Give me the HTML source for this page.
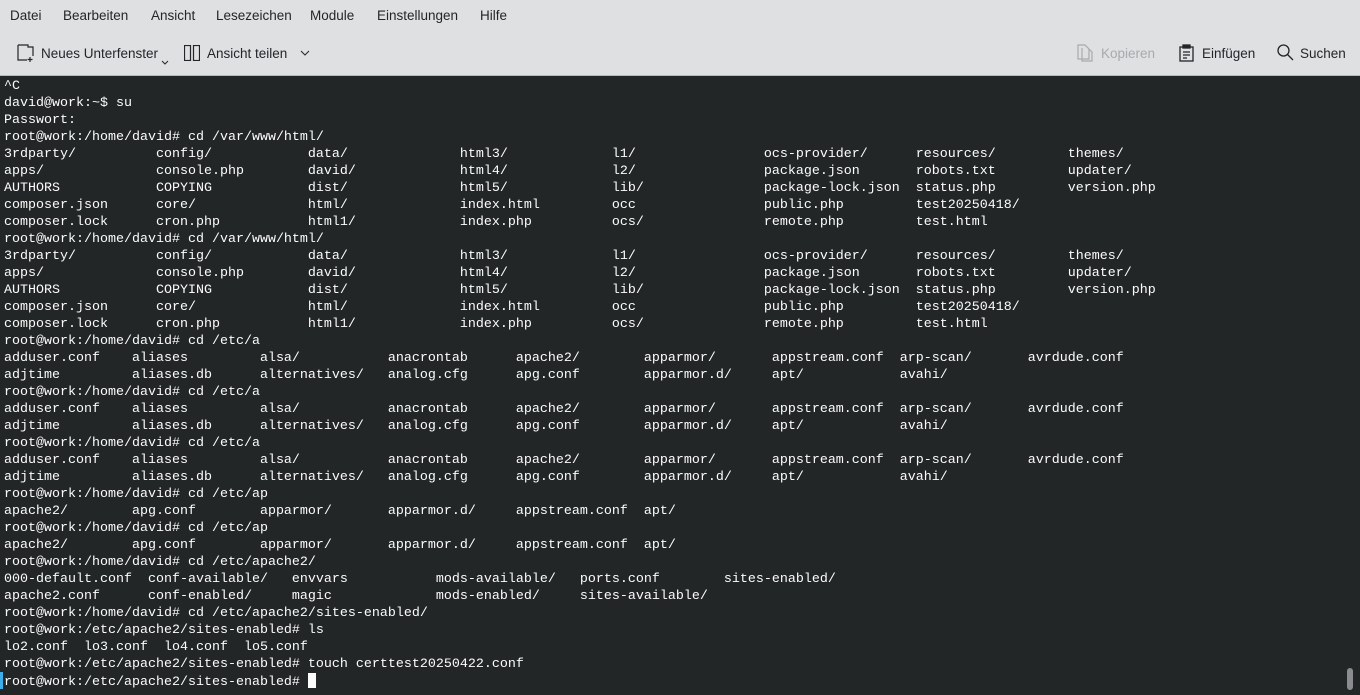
<!DOCTYPE html><html><head><style>
body{margin:0;width:1360px;height:695px;overflow:hidden;background:#232627;font-family:"Liberation Sans",sans-serif}
.menu{position:absolute;top:0;left:0;width:1360px;height:30px;background:#dee0e2;font-size:13.5px;color:#232629}
.menu span{position:absolute;top:8px}
.tb{position:absolute;top:30px;left:0;width:1360px;height:45px;background:#dee0e2;border-bottom:1px solid #b8babd;font-size:13.5px;color:#232629}
.tb .t{position:absolute;top:16px}
.tb svg{position:absolute}
pre{position:absolute;top:78px;left:4px;margin:0;font-family:"Liberation Mono",monospace;font-size:13.33px;line-height:17px;color:#fcfcfc}
.cur{display:inline-block;width:8px;height:15px;background:#fcfcfc;vertical-align:-3px}
</style></head><body>
<div class="menu"><span style="left:10px">Datei</span><span style="left:63px">Bearbeiten</span><span style="left:151px">Ansicht</span><span style="left:216px">Lesezeichen</span><span style="left:310px">Module</span><span style="left:377px">Einstellungen</span><span style="left:480px">Hilfe</span></div>
<div class="tb">
<svg style="left:17px;top:14px" width="18" height="18" fill="none" stroke="#232629" stroke-width="1.2"><path d="M1 1h10v2h5v9M1 1v15h9M13 13v5M10.5 15.5h5"/></svg>
<span class="t" style="left:41px">Neues Unterfenster</span>
<svg style="left:161px;top:30px" width="8" height="5" fill="none" stroke="#232629"><path d="M1 1l3 3 3-3"/></svg>
<svg style="left:184px;top:15px" width="16" height="16" fill="none" stroke="#232629" stroke-width="1.2"><rect x="0.5" y="0.5" width="6" height="15"/><rect x="9.5" y="0.5" width="6" height="15"/></svg>
<span class="t" style="left:207px">Ansicht teilen</span>
<svg style="left:300px;top:20px" width="10" height="6" fill="none" stroke="#232629"><path d="M1 1l4 4 4-4"/></svg>
<svg style="left:1077px;top:14px" width="16" height="18" fill="none" stroke="#a8aaad" stroke-width="1.2"><path d="M1 1h7l4 4v10H1zM5 4v13h10V8l-3-3"/></svg>
<span class="t" style="left:1101px;color:#a8aaad">Kopieren</span>
<svg style="left:1179px;top:14px" width="15" height="18" fill="none" stroke="#232629" stroke-width="1.3"><rect x="1" y="3" width="13" height="14"/><rect x="4" y="1" width="7" height="3" fill="#232629"/><path d="M4 8h7M4 11h7M4 14h4"/></svg>
<span class="t" style="left:1202px">Einfügen</span>
<svg style="left:1277px;top:14px" width="17" height="17" fill="none" stroke="#232629" stroke-width="1.3"><circle cx="6.5" cy="6.5" r="5.5"/><path d="M10.5 10.5l5.5 5.5"/></svg>
<span class="t" style="left:1300px">Suchen</span>
</div>
<pre>^C
david@work:~$ su
Passwort:
root@work:/home/david# cd /var/www/html/
3rdparty/          config/            data/              html3/             l1/                ocs-provider/      resources/         themes/
apps/              console.php        david/             html4/             l2/                package.json       robots.txt         updater/
AUTHORS            COPYING            dist/              html5/             lib/               package-lock.json  status.php         version.php
composer.json      core/              html/              index.html         occ                public.php         test20250418/
composer.lock      cron.php           html1/             index.php          ocs/               remote.php         test.html
root@work:/home/david# cd /var/www/html/
3rdparty/          config/            data/              html3/             l1/                ocs-provider/      resources/         themes/
apps/              console.php        david/             html4/             l2/                package.json       robots.txt         updater/
AUTHORS            COPYING            dist/              html5/             lib/               package-lock.json  status.php         version.php
composer.json      core/              html/              index.html         occ                public.php         test20250418/
composer.lock      cron.php           html1/             index.php          ocs/               remote.php         test.html
root@work:/home/david# cd /etc/a
adduser.conf    aliases         alsa/           anacrontab      apache2/        apparmor/       appstream.conf  arp-scan/       avrdude.conf
adjtime         aliases.db      alternatives/   analog.cfg      apg.conf        apparmor.d/     apt/            avahi/
root@work:/home/david# cd /etc/a
adduser.conf    aliases         alsa/           anacrontab      apache2/        apparmor/       appstream.conf  arp-scan/       avrdude.conf
adjtime         aliases.db      alternatives/   analog.cfg      apg.conf        apparmor.d/     apt/            avahi/
root@work:/home/david# cd /etc/a
adduser.conf    aliases         alsa/           anacrontab      apache2/        apparmor/       appstream.conf  arp-scan/       avrdude.conf
adjtime         aliases.db      alternatives/   analog.cfg      apg.conf        apparmor.d/     apt/            avahi/
root@work:/home/david# cd /etc/ap
apache2/        apg.conf        apparmor/       apparmor.d/     appstream.conf  apt/
root@work:/home/david# cd /etc/ap
apache2/        apg.conf        apparmor/       apparmor.d/     appstream.conf  apt/
root@work:/home/david# cd /etc/apache2/
000-default.conf  conf-available/   envvars           mods-available/   ports.conf        sites-enabled/
apache2.conf      conf-enabled/     magic             mods-enabled/     sites-available/
root@work:/home/david# cd /etc/apache2/sites-enabled/
root@work:/etc/apache2/sites-enabled# ls
lo2.conf  lo3.conf  lo4.conf  lo5.conf
root@work:/etc/apache2/sites-enabled# touch certtest20250422.conf
root@work:/etc/apache2/sites-enabled# <span class="cur"></span></pre>
<div style="position:absolute;left:0;top:672px;width:3px;height:17px;background:#3daee9"></div>
<div style="position:absolute;left:1347px;top:668px;width:6px;height:22px;background:#8a8c8f;border-radius:3px"></div>
</body></html>
